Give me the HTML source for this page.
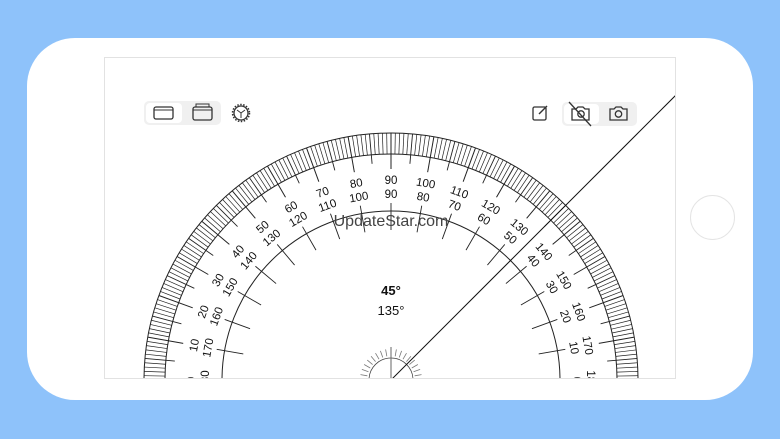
<!DOCTYPE html>
<html><head><meta charset="utf-8"><style>
html,body{margin:0;padding:0;}
body{width:780px;height:439px;background:#8ec2fa;position:relative;overflow:hidden;font-family:"Liberation Sans",sans-serif;}
.phone{position:absolute;left:27px;top:38px;width:726px;height:362px;background:#fff;border-radius:48px;}
.home{position:absolute;left:690px;top:195px;width:45px;height:45px;border-radius:50%;border:1.5px solid #e4e4e4;box-sizing:border-box;}
.screen{position:absolute;left:104px;top:57px;width:572px;height:322px;border:1px solid #e2e2e2;box-sizing:border-box;overflow:hidden;background:#fff;}
svg{position:absolute;left:0;top:0;display:block;}
</style></head><body>
<div class="phone"></div>
<div class="home"></div>
<div class="screen"><svg id="s" width="572" height="322" viewBox="104 57 572 322"></svg></div>
<script>
var cx=390,cy=379,o='';
function P(r,a){var t=a*Math.PI/180;return [cx+r*Math.cos(t),cy-r*Math.sin(t)];}
function L(r1,r2,a,w,c){var p=P(r1,a),q=P(r2,a);o+='<line x1="'+p[0].toFixed(2)+'" y1="'+p[1].toFixed(2)+'" x2="'+q[0].toFixed(2)+'" y2="'+q[1].toFixed(2)+'" stroke="'+(c||'#222')+'" stroke-width="'+(w||0.8)+'"/>';}
o+='<circle cx="390" cy="379" r="247" fill="none" stroke="#222" stroke-width="1"/>';
o+='<circle cx="390" cy="379" r="226" fill="none" stroke="#222" stroke-width="1"/>';
o+='<circle cx="390" cy="379" r="169" fill="none" stroke="#222" stroke-width="1"/>';
for(var a=0;a<=180;a++){
 if(a%10==0){L(247,211,a,1);}
 else if(a%5==0){L(247,217,a,0.9);}
 else L(247,226,a,0.7);
}
for(var a=0;a<=180;a+=10){L(150,177,a,0.9);}
for(var a=0;a<=180;a+=10){
 var rot=90-a;
 var p=P(199,a);o+='<text x="'+p[0].toFixed(1)+'" y="'+p[1].toFixed(1)+'" transform="rotate('+rot+' '+p[0].toFixed(1)+' '+p[1].toFixed(1)+')" text-anchor="middle" dominant-baseline="middle" font-size="11.5" fill="#111">'+(180-a)+'</text>';
 p=P(185,a);o+='<text x="'+p[0].toFixed(1)+'" y="'+p[1].toFixed(1)+'" transform="rotate('+rot+' '+p[0].toFixed(1)+' '+p[1].toFixed(1)+')" text-anchor="middle" dominant-baseline="middle" font-size="11.5" fill="#111">'+a+'</text>';
}
o+='<circle cx="390" cy="379" r="22" fill="none" stroke="#444" stroke-width="0.8"/>';
for(var a=0;a<=180;a+=10){L(24,31,a,0.8,'#777');}
L(0,33,90,1,'#666');
L(0,420,45,1,'#111');
o+='<text x="390" y="225" text-anchor="middle" font-size="16" fill="#444">UpdateStar.com</text>';
o+='<text x="390" y="294" text-anchor="middle" font-size="13" font-weight="bold" fill="#111">45°</text>';
o+='<text x="390" y="314" text-anchor="middle" font-size="13" fill="#111">135°</text>';
o+='<rect x="143" y="100" width="77" height="24" rx="5" fill="#f0f0f0"/><rect x="145" y="102" width="36" height="20" rx="4" fill="#fff"/>';
o+='<rect x="153" y="106" width="19" height="12" rx="2" fill="none" stroke="#333" stroke-width="1.3"/><line x1="153" y1="109" x2="172" y2="109" stroke="#333"/>';
o+='<rect x="192" y="106" width="19" height="13" rx="2" fill="none" stroke="#333" stroke-width="1.3"/><path d="M195 106v-3h13v3" fill="none" stroke="#333"/><line x1="192" y1="109" x2="211" y2="109" stroke="#333"/>';
o+='<circle cx="240" cy="112" r="7" fill="none" stroke="#333" stroke-width="1.3"/><circle cx="240" cy="112" r="8.5" fill="none" stroke="#333" stroke-width="1.5" stroke-dasharray="1.5 1.5"/><path d="M240 112l-4-3M240 112l4-3M240 112v5" stroke="#333"/>';
o+='<rect x="532" y="106" width="13" height="13" rx="1.5" fill="none" stroke="#333" stroke-width="1.3"/><path d="M538 113l8-8" stroke="#333" stroke-width="1.4"/>';
o+='<rect x="561" y="101" width="75" height="24" rx="5" fill="#f0f0f0"/><rect x="563" y="103" width="35" height="20" rx="4" fill="#fff"/>';
o+='<path d="M571 108h4l2-2h5l2 2h4v11h-17z" fill="none" stroke="#333" stroke-width="1.3"/><circle cx="580" cy="113" r="3.2" fill="none" stroke="#333" stroke-width="1.3"/><path d="M568 101l22 24" stroke="#333" stroke-width="1.3"/>';
o+='<path d="M609 108h4l2-2h5l2 2h4v11h-17z" fill="none" stroke="#333" stroke-width="1.3"/><circle cx="617.5" cy="113" r="3.2" fill="none" stroke="#333" stroke-width="1.3"/>';
document.getElementById('s').innerHTML=o;
</script>
</body></html>
